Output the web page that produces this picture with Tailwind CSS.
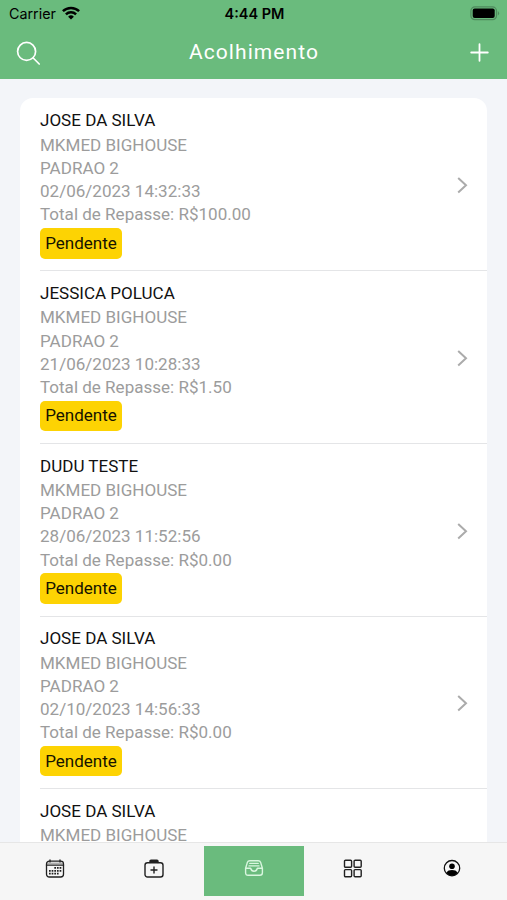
<!DOCTYPE html>
<html lang="pt-BR">
<head>
<meta charset="utf-8">
<meta name="viewport" content="width=device-width, initial-scale=1">
<title>Acolhimento</title>
<script src="https://cdn.jsdelivr.net/npm/@tailwindcss/browser@4"></script>
</head>
<body class="h-[900px] w-[507px] overflow-hidden bg-[#f3f5f9] font-[Roboto,sans-serif] antialiased">
<div class="flex h-[900px] flex-col">
  <header class="flex h-[79px] shrink-0 flex-col bg-[#6abb7d]">
    <div class="grid h-[27px] grid-cols-3 items-center pr-[7px] pl-[9px] font-[Inter,sans-serif] text-black">
      <div class="flex items-center gap-1.5">
        <span class="pt-px text-[14.3px] leading-none">Carrier</span>
        <svg class="h-[14px] w-[18px]" viewBox="0 0 18 14" fill="none" stroke="#000" stroke-width="2.5"><path d="M.9 5.2a11.7 11.7 0 0 1 16.2 0M3.9 8.3a7.4 7.4 0 0 1 10.2 0"/><path d="M9 13.6 6.1 10.7a4.2 4.2 0 0 1 5.8 0z" fill="#000" stroke="none"/></svg>
      </div>
      <span class="pt-px text-center text-[14.5px] leading-none font-semibold whitespace-nowrap">4:44 PM</span>
      <svg class="h-[15px] w-[30px] justify-self-end" viewBox="0 0 30 15"><rect x=".9" y=".9" width="25.6" height="12.8" rx="4" fill="none" stroke="#4f8a5d" stroke-width="1.2"/><rect x="2.7" y="2.6" width="22" height="9.4" rx="2"/><path d="M27.9 5q2.4 2.3 0 4.6z" fill="#4f8a5d"/></svg>
    </div>
    <div class="flex h-[51px] items-center justify-between pr-[18px] pl-4">
      <svg class="h-6 w-6" viewBox="0 0 24 24" fill="none" stroke="#fff" stroke-width="1.7" stroke-linecap="round"><circle cx="10.6" cy="10.4" r="9"/><path d="m17.2 17 6 6"/></svg>
      <h1 class="-ml-0.5 text-[21px] leading-none tracking-[1.08px] text-white">Acolhimento</h1>
      <svg class="h-[19px] w-[19px]" viewBox="0 0 19 19" stroke="#fff" stroke-width="1.8" stroke-linecap="round"><path d="M9.5 1.2v16.6M1.2 9.5h16.6"/></svg>
    </div>
  </header>

  <main class="min-h-0 flex-1 overflow-hidden px-5 pt-[19px]">
    <ul id="list" class="rounded-[13px] bg-white pt-[.8px]"></ul>
  </main>

  <nav class="grid h-[58px] shrink-0 grid-cols-[99px_99px_100px_99px_99px] justify-center border-t border-[#e6e6e6] bg-[#f6f6f6] pt-[3px] pb-[4px]">
    <a class="flex justify-center pt-[13px]">
      <svg class="h-5 w-5" viewBox="0 0 20 20" fill="none" stroke="#202020" stroke-width="1.3"><rect x="1.5" y="2.2" width="17" height="15.8" rx="2.8"/><path d="M1.5 6.2h17M5 1v2M15 1v2" stroke-linecap="round"/><path d="M2 4.2h16" stroke="#777" stroke-width=".8"/><path d="M9.3 8.9h7M4 11.8h12.3M4 14.7h9.6" stroke-width="1.8" stroke-dasharray="1.7 .95"/></svg>
    </a>
    <a class="flex justify-center pt-[13px]">
      <svg class="h-5 w-5" viewBox="0 0 20 20" fill="none" stroke="#202020" stroke-width="1.4" stroke-linecap="round"><rect x="1" y="3.8" width="18" height="14.2" rx="2.5"/><path d="M6 3.6V2.3Q6 1.3 7 1.3h6q1 0 1 1v1.3M6.5 2.6h7M10 8v6M7 11h6"/></svg>
    </a>
    <a class="flex justify-center bg-[#6abb7d] pt-3">
      <svg class="h-5 w-5" viewBox="0 0 20 20" fill="none" stroke="#d9f6df" stroke-width="1.4" stroke-linecap="round" stroke-linejoin="round"><path d="M1.6 10.2 3.3 4.6Q4 2.7 5.8 2.7h8.4q1.8 0 2.5 1.9l1.7 5.6v4.6q0 2.5-2.5 2.5H4.1q-2.5 0-2.5-2.5zM1.6 10.2h5q.8 3 3.4 3t3.4-3h5M5.8 5.4h8.4M5 7.9h10"/></svg>
    </a>
    <a class="flex justify-center pt-[13px]">
      <svg class="h-5 w-5" viewBox="0 0 20 20" fill="none" stroke="#202020" stroke-width="1.4"><rect x="1.5" y="1.2" width="7.1" height="7.1" rx="1"/><rect x="11.1" y="1.2" width="7.1" height="7.1" rx="1"/><rect x="1.5" y="10.6" width="7.1" height="7.1" rx="1"/><rect x="11.1" y="10.6" width="7.1" height="7.1" rx="1"/></svg>
    </a>
    <a class="flex justify-center pt-3">
      <svg class="h-5 w-5" viewBox="0 0 20 20" fill="none"><circle cx="10" cy="10.2" r="7.7" stroke="#111" stroke-width="1.3"/><circle cx="10" cy="8.2" r="2.8" fill="#000"/><path d="M4.3 14.4q1.7-2.3 5.7-2.3t5.7 2.3q-2 3.3-5.7 3.3t-5.7-3.3z" fill="#000"/></svg>
    </a>
  </nav>
</div>

<template id="row">
  <li class="flex h-[172.6px] pl-5">
    <div class="flex flex-1 items-center justify-between border-b border-[#e4e5e7] pr-[19px]">
      <div class="flex h-full flex-col items-start pt-[10.7px] text-[17.05px] leading-[23.2px] whitespace-nowrap text-[#9c9c9c]">
        <h2 class="pb-[1.2px] text-[#111]"></h2>
        <p>MKMED BIGHOUSE</p>
        <div class="details">
          <p>PADRAO 2</p>
          <p class="date"></p>
          <p class="total"></p>
          <span class="mt-[1.4px] flex h-[30.5px] w-[82px] items-center justify-center rounded-[5px] bg-[#fdd303] text-[#161300]">Pendente</span>
        </div>
      </div>
      <svg class="mt-[1.5px] h-[18px] w-3" viewBox="0 0 12 18" fill="none" stroke="#ababab" stroke-width="2"><path d="m2.2 1.9 7.8 7.3-7.8 7.3"/></svg>
    </div>
  </li>
</template>
<script>
const rows = [
  ["JOSE DA SILVA", "02/06/2023 14:32:33", "100.00"],
  ["JESSICA POLUCA", "21/06/2023 10:28:33", "1.50"],
  ["DUDU TESTE", "28/06/2023 11:52:56", "0.00"],
  ["JOSE DA SILVA", "02/10/2023 14:56:33", "0.00"],
  ["JOSE DA SILVA"]
];
const list = document.getElementById("list");
for (const [name, date, total] of rows) {
  const row = document.getElementById("row").content.cloneNode(true);
  row.querySelector("h2").textContent = name;
  if (date) {
    row.querySelector(".date").textContent = date;
    row.querySelector(".total").textContent = "Total de Repasse: R$" + total;
  } else {
    row.querySelector(".details").remove();
  }
  list.append(row);
}
</script>
</body>
</html>
